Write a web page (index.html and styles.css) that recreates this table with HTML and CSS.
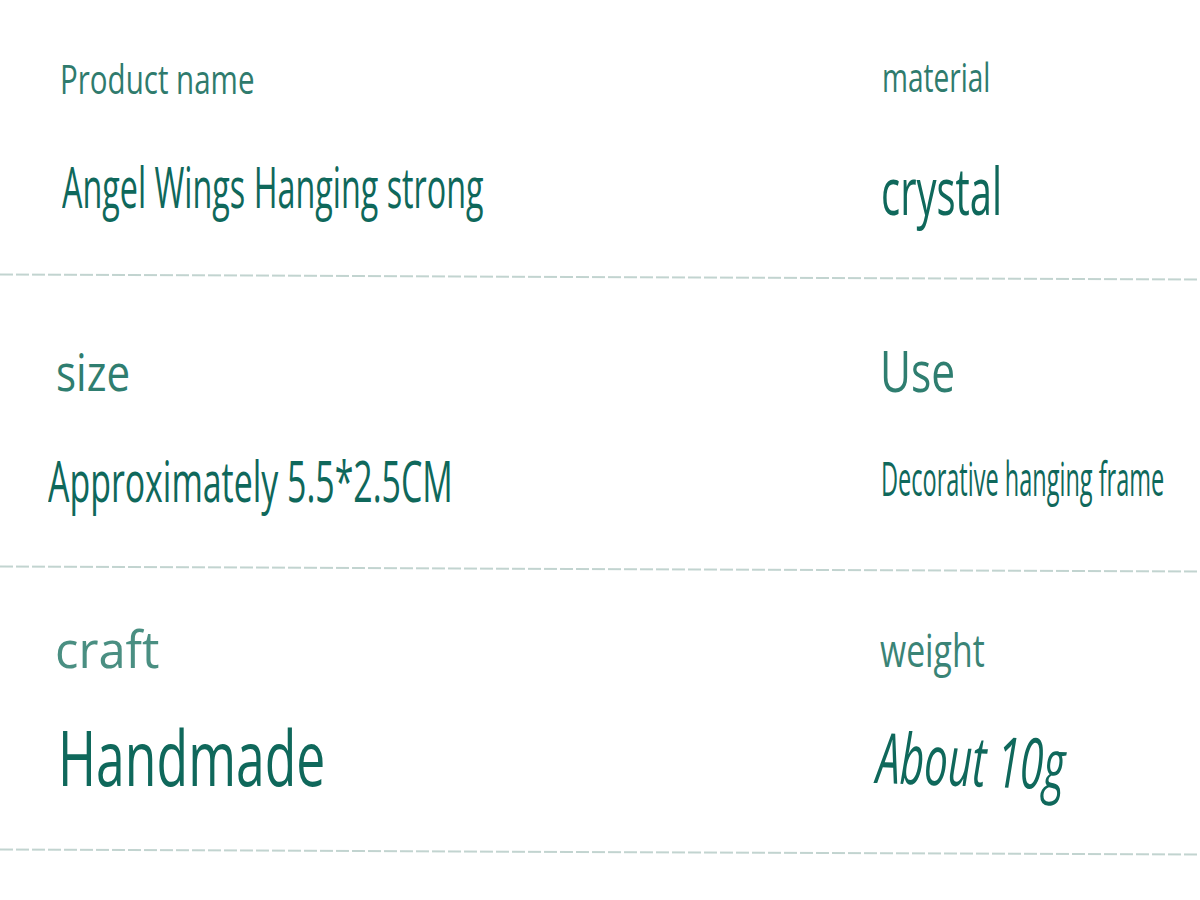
FILE: index.html
```html
<!DOCTYPE html>
<html lang="en">
<head>
<meta charset="utf-8">
<title>Product specifications</title>
<link rel="stylesheet" href="styles.css">
</head>
<body>
<main class="sheet">
  <section class="row row-1">
    <div class="cell cell-left">
      <div class="label t-product">Product name</div>
      <div class="value t-angel">Angel Wings Hanging strong</div>
    </div>
    <div class="cell cell-right">
      <div class="label t-material">material</div>
      <div class="value t-crystal">crystal</div>
    </div>
  </section>
  <div class="divider"></div>
  <section class="row row-2">
    <div class="cell cell-left">
      <div class="label t-size">size</div>
      <div class="value t-approx">Approximately 5.5*2.5CM</div>
    </div>
    <div class="cell cell-right">
      <div class="label t-use">Use</div>
      <div class="value t-deco">Decorative hanging frame</div>
    </div>
  </section>
  <div class="divider"></div>
  <section class="row row-3">
    <div class="cell cell-left">
      <div class="label t-craft">craft</div>
      <div class="value t-hand">Handmade</div>
    </div>
    <div class="cell cell-right">
      <div class="label t-weight">weight</div>
      <div class="value t-about">About 10g</div>
    </div>
  </section>
  <div class="divider"></div>
</main>
</body>
</html>
```
FILE: styles.css
```css
html, body {
  margin: 0;
  padding: 0;
  background: #ffffff;
}

body {
  font-family: "Open Sans", "Noto Sans", sans-serif;
  width: 1200px;
  height: 900px;
  overflow: hidden;
}

.sheet {
  display: flex;
  flex-direction: column;
  width: 1200px;
  padding-bottom: 30px;
  overflow: hidden;
}

.row {
  display: grid;
  grid-template-columns: 880px 1fr;
}

.row-1 { height: 276px; }
.row-2 { height: 290px; }
.row-3 { height: 281px; }

.cell {
  display: flex;
  flex-direction: column;
  min-width: 0;
}

.cell-left { padding-left: 60px; }
.cell-right { padding-left: 0; }

.label,
.value {
  line-height: 1;
  white-space: nowrap;
  transform-origin: 0 0;
}

.label { color: #36826f; }
.value { color: #0f685b; }

.divider {
  flex: none;
  height: 2px;
  background: repeating-linear-gradient(90deg, #c2d4d0 0 13px, transparent 13px 16px);
  transform: rotate(0.23deg);
}

/* row 1 */
.t-product { font-size: 41px; margin-top: 58px; margin-left: 0; color: #2f7b6d; transform: scaleX(0.72); }
.t-angel { font-size: 56px; margin-top: 59px; margin-left: 2px; transform: scaleX(0.577); }
.t-material { font-size: 40px; margin-top: 57px; margin-left: 2px; color: #2f7b6d; transform: scaleX(0.7); }
.t-crystal { font-size: 66px; margin-top: 59px; margin-left: 1px; transform: scaleX(0.605); }

/* row 2 */
.t-size { font-size: 52px; margin-top: 67px; margin-left: -4px; color: #2f7e70; transform: scaleX(0.81); }
.t-approx { font-size: 56px; margin-top: 55px; margin-left: -12px; transform: scaleX(0.605); }
.t-use { font-size: 56px; margin-top: 64px; margin-left: 0; color: #2f7e70; transform: scaleX(0.76); }
.t-deco { font-size: 48px; margin-top: 56px; margin-left: 1px; transform: scaleX(0.49); }

/* row 3 */
.t-craft { font-size: 52px; margin-top: 52px; margin-left: -5px; color: #4a8f82; transform: scaleX(0.94); }
.t-hand { font-size: 76px; margin-top: 45px; margin-left: -2px; transform: scaleX(0.68); }
.t-weight { font-size: 45px; margin-top: 57px; margin-left: 0; color: #3a8476; transform: scaleX(0.75); }
.t-about { font-size: 70px; margin-top: 49px; margin-left: -2px; font-style: italic; transform: rotate(2deg) scaleX(0.6); }
```
